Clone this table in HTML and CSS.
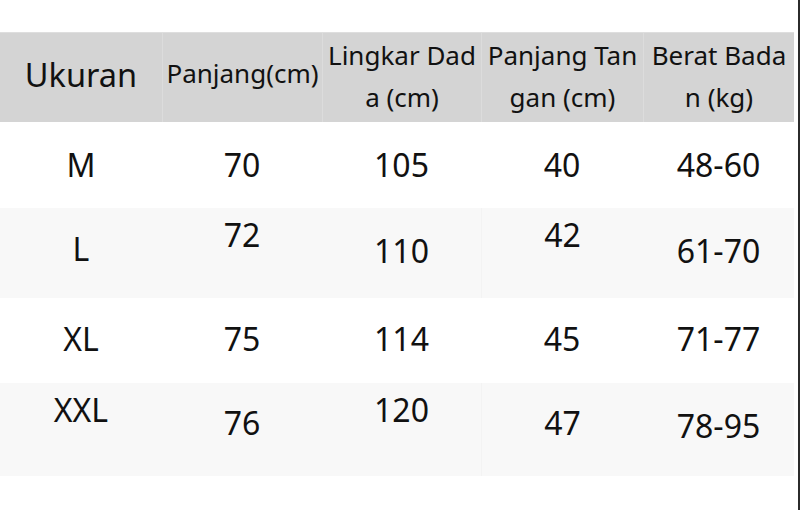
FILE: index.html
```html
<!DOCTYPE html>
<html lang="id">
<head>
<meta charset="utf-8">
<title>Ukuran</title>
<link rel="stylesheet" href="styles.css">
</head>
<body>
<div class="page">
  <div class="table">
    <div class="row head">
      <div class="cell c1 big up3">Ukuran</div>
      <div class="cell c2 up5">Panjang(cm)</div>
      <div class="cell c3 up2">Lingkar Dada (cm)</div>
      <div class="cell c4 up2">Panjang Tangan (cm)</div>
      <div class="cell c5 up2">Berat Badan (kg)</div>
    </div>
    <div class="row body r1">
      <div class="cell c1 up1">M</div>
      <div class="cell c2 up1">70</div>
      <div class="cell c3 up1">105</div>
      <div class="cell c4 up1">40</div>
      <div class="cell c5 up1">48-60</div>
    </div>
    <div class="row body r2 alt">
      <div class="cell c1 up5">L</div>
      <div class="cell c2 up19">72</div>
      <div class="cell c3 up3">110</div>
      <div class="cell c4 up19">42</div>
      <div class="cell c5 up3">61-70</div>
    </div>
    <div class="row body r3">
      <div class="cell c1 up2">XL</div>
      <div class="cell c2 up2">75</div>
      <div class="cell c3 up2">114</div>
      <div class="cell c4 up2">45</div>
      <div class="cell c5 up2">71-77</div>
    </div>
    <div class="row body r4 alt">
      <div class="cell c1 up20">XXL</div>
      <div class="cell c2 up7">76</div>
      <div class="cell c3 up20">120</div>
      <div class="cell c4 up7">47</div>
      <div class="cell c5 up4">78-95</div>
    </div>
  </div>
  <div class="edge"></div>
</div>
</body>
</html>
```

FILE: styles.css
```css
html, body {
  margin: 0;
  padding: 0;
  background: #ffffff;
}

body {
  font-family: "Noto Sans", "Open Sans", sans-serif;
  color: #111111;
  width: 800px;
  height: 512px;
  overflow: hidden;
}

.page {
  display: flex;
  height: 510px;
}

.table {
  width: 794px;
  padding-top: 32px;
  display: flex;
  flex-direction: column;
}

.edge {
  margin-left: 4px;
  width: 2px;
  background: #2b2b2b;
}

.row {
  display: grid;
  grid-template-columns: 162px 160px 159px 162px 151px;
}

.head {
  height: 90px;
  background: #d4d4d4;
  border-top: 1px solid #dedede;
  box-sizing: border-box;
}

.head .cell {
  font-size: 26px;
  line-height: 42px;
  padding-left: 3px;
  padding-right: 3px;
  word-break: break-all;
}

.head .cell + .cell {
  border-left: 1px solid #dcdcdc;
}

.head .big {
  font-size: 32.5px;
}

.cell {
  display: flex;
  align-items: center;
  justify-content: center;
  text-align: center;
  box-sizing: border-box;
}

.body .cell {
  font-size: 32px;
}

.r1 { height: 86px; }
.r2 { height: 90px; }
.r3 { height: 85px; }
.r4 { height: 93px; }

.alt {
  background: #f8f8f8;
}

.alt .c4 {
  border-left: 1px solid #f3f3f3;
}

.up1 { padding-bottom: 2px; }
.up2 { padding-bottom: 4px; }
.up3 { padding-bottom: 6px; }
.up4 { padding-bottom: 8px; }
.up5 { padding-bottom: 10px; }
.up7 { padding-bottom: 14px; }
.up19 { padding-bottom: 38px; }
.up20 { padding-bottom: 40px; }
```
